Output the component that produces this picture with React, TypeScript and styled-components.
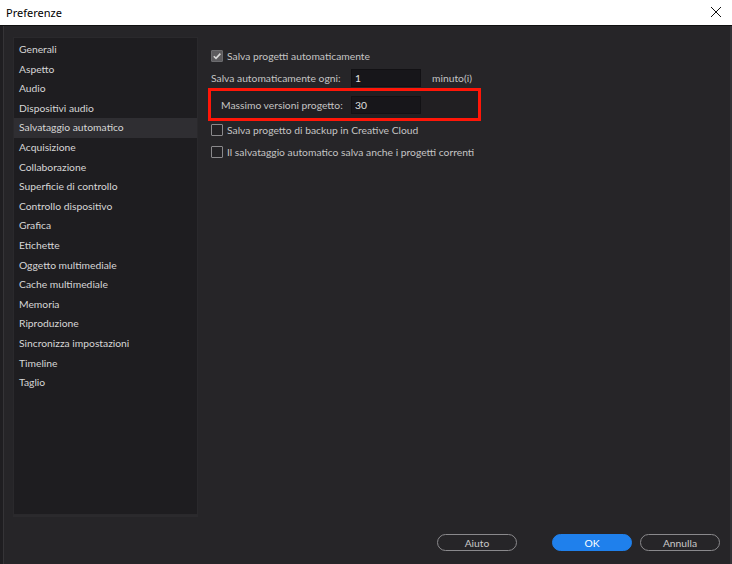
import React from "react";
import styled, { createGlobalStyle } from "styled-components";

const Global = createGlobalStyle`
  html, body { margin: 0; padding: 0; background: #252427; }
  * { box-sizing: border-box; }
`;

const FONT = `"Lato", "Noto Sans", "Liberation Sans", sans-serif`;
const FS = "10.3px";

const Window = styled.div`
  width: 732px;
  height: 564px;
  display: flex;
  flex-direction: column;
  font-family: ${FONT};
  overflow: hidden;
`;

const TitleBar = styled.div`
  height: 26px;
  flex: none;
  background: #ffffff;
  border-bottom: 1px solid #101010;
  display: flex;
  align-items: center;
  justify-content: space-between;
  padding: 0 6px 1px 6px;
  color: #000;
  font-family: "Noto Sans", "Liberation Sans", sans-serif;
  font-size: 11px;
`;

const CloseBtn = styled.div`
  width: 20px;
  height: 20px;
  display: flex;
  align-items: center;
  justify-content: center;
`;

const Body = styled.div`
  flex: 1;
  display: flex;
  flex-direction: column;
  background: #262528;
  border-left: 3px solid #1f1e21;
  border-right: 2px solid #333236;
  box-shadow: inset 1px 0 0 #353437;
`;

const Main = styled.div`
  display: flex;
  padding: 11px 0 0 10px;
  gap: 13px;
`;

const Sidebar = styled.div`
  width: 185px;
  height: 478px;
  background: #1e1d20;
  border: 1px solid #2a292c;
  box-shadow: 0 2px 0 #2b2a2d;
  padding-top: 2px;
  display: flex;
  flex-direction: column;
`;

const NavItem = styled.div<{ $active?: boolean }>`
  height: 19.6px;
  line-height: 19.6px;
  padding-left: 5px;
  font-size: ${FS};
  color: #d6d6d6;
  white-space: nowrap;
  background: ${(p) => (p.$active ? "#2f2e32" : "transparent")};
`;

const Content = styled.div`
  flex: 1;
  display: flex;
  flex-direction: column;
  padding-top: 11px;
`;

const Row = styled.div<{ $h?: number; $mt?: number }>`
  display: flex;
  align-items: center;
  height: ${(p) => p.$h ?? 22}px;
  margin-top: ${(p) => p.$mt ?? 0}px;
  font-size: ${FS};
  color: #c4c4c4;
  white-space: nowrap;
`;

const Highlight = styled.div`
  display: flex;
  align-items: center;
  width: 273px;
  height: 33px;
  margin-left: -3px;
  border: 3px solid #ff1608;
  background: #211f22;
  padding-left: 10px;
  font-size: ${FS};
  color: #c4c4c4;
  white-space: nowrap;
`;

const Label = styled.span<{ $w?: number; $ml?: number }>`
  display: inline-block;
  width: ${(p) => (p.$w ? `${p.$w}px` : "auto")};
  margin-left: ${(p) => p.$ml ?? 0}px;
`;

const Input = styled.div`
  width: 70px;
  height: 18px;
  background: #17161a;
  border: 1px solid #121114;
  color: #e0e0e0;
  font-size: ${FS};
  line-height: 16px;
  padding-left: 3px;
`;

const Box = styled.span<{ $checked?: boolean }>`
  width: 12px;
  height: 12px;
  margin-right: 4px;
  flex: none;
  display: inline-flex;
  align-items: center;
  justify-content: center;
  border: 1px solid ${(p) => (p.$checked ? "#6b6b6e" : "#8a898c")};
  background: ${(p) => (p.$checked ? "#5c5b5e" : "#232225")};
  border-radius: 1px;
`;

const Footer = styled.div`
  margin-top: auto;
  height: 37px;
  display: flex;
  align-items: flex-start;
  justify-content: flex-end;
  padding: 7px 10px 0 0;
  gap: 8px;
`;

const Button = styled.div<{ $primary?: boolean; $gap?: number }>`
  width: 80px;
  height: 17px;
  border-radius: 9px;
  display: flex;
  align-items: center;
  justify-content: center;
  font-size: ${FS};
  margin-right: ${(p) => p.$gap ?? 0}px;
  color: ${(p) => (p.$primary ? "#ffffff" : "#c8c8c8")};
  background: ${(p) => (p.$primary ? "#1f80ec" : "transparent")};
  border: 1.5px solid ${(p) => (p.$primary ? "#1f80ec" : "#8a898c")};
`;

const Check = () => (
  <svg width="10" height="10" viewBox="0 0 10 10">
    <path d="M1.8 5.2 L4 7.4 L8.4 2.6" stroke="#d8d8d8" strokeWidth="1.6" fill="none" />
  </svg>
);

const items = [
  "Generali",
  "Aspetto",
  "Audio",
  "Dispositivi audio",
  "Salvataggio automatico",
  "Acquisizione",
  "Collaborazione",
  "Superficie di controllo",
  "Controllo dispositivo",
  "Grafica",
  "Etichette",
  "Oggetto multimediale",
  "Cache multimediale",
  "Memoria",
  "Riproduzione",
  "Sincronizza impostazioni",
  "Timeline",
  "Taglio",
];

export default function App() {
  return (
    <>
      <Global />
      <Window>
        <TitleBar>
          <span>Preferenze</span>
          <CloseBtn>
            <svg width="12" height="12" viewBox="0 0 12 12">
              <path d="M1 1 L11 11 M11 1 L1 11" stroke="#111" strokeWidth="1" />
            </svg>
          </CloseBtn>
        </TitleBar>
        <Body>
          <Main>
            <Sidebar>
              {items.map((t, i) => (
                <NavItem key={t} $active={i === 4}>
                  {t}
                </NavItem>
              ))}
            </Sidebar>
            <Content>
              <Row $h={16}>
                <Box $checked>
                  <Check />
                </Box>
                Salva progetti automaticamente
              </Row>
              <Row $h={20} $mt={4}>
                <Label $w={140}>Salva automaticamente ogni:</Label>
                <Input>1</Input>
                <Label $ml={11}>minuto(i)</Label>
              </Row>
              <Highlight>
                <Label $w={130}>Massimo versioni progetto:</Label>
                <Input>30</Input>
              </Highlight>
              <Row $h={18}>
                <Box />
                Salva progetto di backup in Creative Cloud
              </Row>
              <Row $h={26}>
                <Box />
                Il salvataggio automatico salva anche i progetti correnti
              </Row>
            </Content>
          </Main>
          <Footer>
            <Button $gap={27}>Aiuto</Button>
            <Button $primary>OK</Button>
            <Button>Annulla</Button>
          </Footer>
        </Body>
      </Window>
    </>
  );
}
